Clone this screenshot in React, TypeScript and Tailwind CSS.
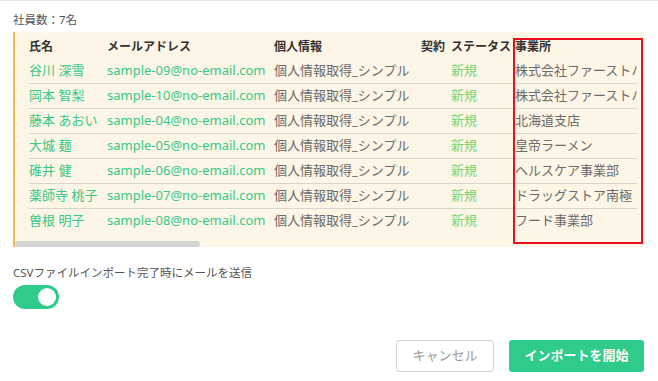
const rows = [
  { name: "谷川 深雪", email: "sample-09@no-email.com", office: "株式会社ファーストハウス" },
  { name: "岡本 智梨", email: "sample-10@no-email.com", office: "株式会社ファーストハウス" },
  { name: "藤本 あおい", email: "sample-04@no-email.com", office: "北海道支店" },
  { name: "大城 麺", email: "sample-05@no-email.com", office: "皇帝ラーメン" },
  { name: "碓井 健", email: "sample-06@no-email.com", office: "ヘルスケア事業部" },
  { name: "薬師寺 桃子", email: "sample-07@no-email.com", office: "ドラッグストア南極" },
  { name: "曽根 明子", email: "sample-08@no-email.com", office: "フード事業部" },
];

const cols = "grid grid-cols-[78px_167px_147px_30px_64px_123px]";

export default function App() {
  return (
    <div
      className="h-[381px] w-[658px] overflow-hidden border-t border-[#e6e6e6] bg-white pl-[13px] pr-[14px] pt-[11px]"
      style={{ fontFamily: '"Noto Sans", "Noto Sans CJK JP", sans-serif' }}
    >
      <p className="h-4 text-[11.5px] leading-4 text-[#555]">社員数：7名</p>

      <div className="relative mt-[4px] border-l-2 border-[#f8b64c] bg-[#fdf5e5] pr-[7px] pt-[4px]">
        <div className={`${cols} h-[22px] items-center pl-[14px] text-[12px] font-bold text-[#333]`}>
          <span>氏名</span>
          <span>メールアドレス</span>
          <span>個人情報</span>
          <span>契約</span>
          <span>ステータス</span>
          <span>事業所</span>
        </div>
        <div className="ml-[14px]">
          {rows.map((r, i) => (
            <div
              key={r.email}
              className={`${cols} h-[25px] items-center whitespace-nowrap text-[13px] ${
                i > 0 ? "border-t border-[#d9d4ca]" : ""
              }`}
            >
              <span className="text-[#35c98a]">{r.name}</span>
              <span className="text-[#35c98a]">{r.email}</span>
              <span className="text-[#6b6b6b]">個人情報取得_シンプル</span>
              <span />
              <span className="text-[#74d67c]">新規</span>
              <span className="overflow-hidden text-[#6b6b6b]">{r.office}</span>
            </div>
          ))}
        </div>
        <div className="mt-[8px] h-[6px] w-[185px] rounded-full bg-[#d4d4d4]" />

        {/* highlight round the 事業所 column */}
        <div className="pointer-events-none absolute left-[498px] top-[6px] h-[206px] w-[130px] border-2 border-[#e8101a]" />
      </div>

      <p className="mt-[18px] h-4 text-[11.5px] leading-4 text-[#555]">CSVファイルインポート完了時にメールを送信</p>

      <div className="mt-[4px] flex h-6 w-[46px] items-center justify-end rounded-full bg-[#2fcb8a] pr-[3px]">
        <div className="h-[18px] w-[18px] rounded-full bg-white" />
      </div>

      <div className="mt-[31px] flex justify-end gap-[15px]">
        <button className="h-8 w-[98px] rounded-[3px] border border-[#cfcfcf] bg-white text-[13px] text-[#9a9a9a]">
          キャンセル
        </button>
        <button className="h-8 w-[135px] rounded-[3px] bg-[#2fcb8a] text-[13px] font-bold text-white">
          インポートを開始
        </button>
      </div>
    </div>
  );
}
